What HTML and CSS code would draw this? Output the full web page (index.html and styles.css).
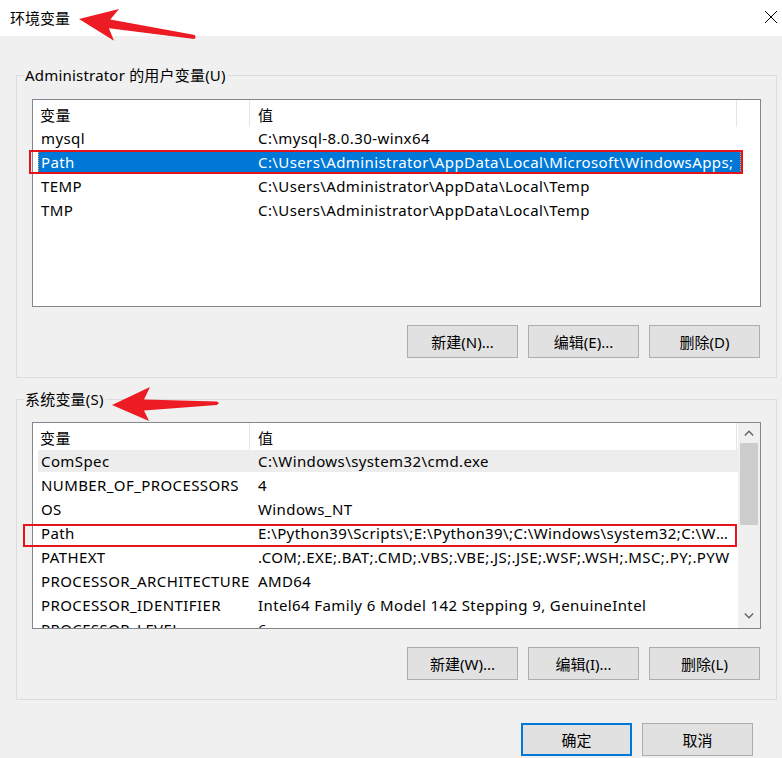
FILE: index.html
```html
<!DOCTYPE html>
<html lang="zh-CN">
<head>
<meta charset="utf-8">
<title>环境变量</title>
<link rel="stylesheet" href="styles.css">
</head>
<body>
<div class="window">
  <div class="titlebar">
    <span class="title">环境变量</span>
    <svg class="close" width="14" height="14" viewBox="0 0 14 14"><path d="M1 1L13 13M13 1L1 13" stroke="#000" stroke-width="1" fill="none"/></svg>
  </div>
  <div class="dialog">
    <fieldset class="group">
      <legend>Administrator 的用户变量(U)</legend>
      <div class="list">
        <div class="list-main">
          <div class="list-head"><div class="c1">变量</div><div class="c2">值</div></div>
          <div class="row"><div class="c1">mysql</div><div class="c2">C:\mysql-8.0.30-winx64</div></div>
          <div class="row selected"><div class="c1">Path</div><div class="c2">C:\Users\Administrator\AppData\Local\Microsoft\WindowsApps;</div></div>
          <div class="row"><div class="c1">TEMP</div><div class="c2">C:\Users\Administrator\AppData\Local\Temp</div></div>
          <div class="row"><div class="c1">TMP</div><div class="c2">C:\Users\Administrator\AppData\Local\Temp</div></div>
        </div>
      </div>
      <div class="btns">
        <button class="btn">新建(N)...</button>
        <button class="btn">编辑(E)...</button>
        <button class="btn">删除(D)</button>
      </div>
    </fieldset>
    <fieldset class="group group-sys">
      <legend>系统变量(S)</legend>
      <div class="list list-sys">
        <div class="list-main">
          <div class="list-head"><div class="c1">变量</div><div class="c2">值</div></div>
          <div class="row hot"><div class="c1">ComSpec</div><div class="c2">C:\Windows\system32\cmd.exe</div></div>
          <div class="row"><div class="c1">NUMBER_OF_PROCESSORS</div><div class="c2">4</div></div>
          <div class="row"><div class="c1">OS</div><div class="c2">Windows_NT</div></div>
          <div class="row"><div class="c1">Path</div><div class="c2">E:\Python39\Scripts\;E:\Python39\;C:\Windows\system32;C:\Windows;C:\Windows\System32\Wbem</div></div>
          <div class="row"><div class="c1">PATHEXT</div><div class="c2">.COM;.EXE;.BAT;.CMD;.VBS;.VBE;.JS;.JSE;.WSF;.WSH;.MSC;.PY;.PYW</div></div>
          <div class="row"><div class="c1">PROCESSOR_ARCHITECTURE</div><div class="c2">AMD64</div></div>
          <div class="row"><div class="c1">PROCESSOR_IDENTIFIER</div><div class="c2">Intel64 Family 6 Model 142 Stepping 9, GenuineIntel</div></div>
          <div class="row"><div class="c1">PROCESSOR_LEVEL</div><div class="c2">6</div></div>
        </div>
        <div class="scrollbar">
          <div class="sb-btn"><svg width="10" height="6" viewBox="0 0 10 6"><polyline points="0.8,5.5 5,1.2 9.2,5.5" fill="none" stroke="#606060" stroke-width="1.3"/></svg></div>
          <div class="sb-thumb"></div>
          <div class="sb-track"></div>
          <div class="sb-btn sb-down"><svg width="10" height="6" viewBox="0 0 10 6"><polyline points="0.8,0.5 5,4.8 9.2,0.5" fill="none" stroke="#606060" stroke-width="1.3"/></svg></div>
        </div>
      </div>
      <div class="btns">
        <button class="btn">新建(W)...</button>
        <button class="btn">编辑(I)...</button>
        <button class="btn">删除(L)</button>
      </div>
    </fieldset>
    <div class="footer">
      <button class="btn btn-default">确定</button>
      <button class="btn">取消</button>
    </div>
  </div>

  <div class="mark mark-user"></div>
  <div class="mark mark-sys"></div>
  <svg class="arrows" width="782" height="758" viewBox="0 0 782 758">
    <polygon points="79,19 119,9 110.3,19.4 194.9,35 195.6,37.2 194.3,39 108.9,28.3 114,40.7" fill="#ed1c24"/>
    <polygon points="112,405 150,387 144,399.5 217,401.5 219,403 217,405 144,410.5 149,421" fill="#ed1c24"/>
  </svg>
</div>
</body>
</html>
```

FILE: styles.css
```css
* { box-sizing: border-box; }
html, body { margin: 0; padding: 0; }
body {
  width: 782px;
  height: 758px;
  overflow: hidden;
  background: #f0f0f0;
  font-family: "Noto Sans", "Noto Sans CJK SC", sans-serif;
  font-size: 15px;
  color: #000;
}
.window { position: relative; width: 782px; height: 758px; }

.titlebar {
  height: 36px;
  background: #fff;
  display: flex;
  align-items: flex-start;
  justify-content: space-between;
  padding: 0 4px 0 10px;
}
.title { line-height: 20px; margin-top: 8px; }
.close { margin-top: 10px; }

.dialog { padding: 29px 5px 0 16px; }

.group {
  margin: 0;
  padding: 14px 15px 19px;
  border: 1px solid #dcdcdc;
  min-width: 0;
}
.group legend {
  padding: 0 1px;
  margin-left: -8px;
  line-height: 20px;
  letter-spacing: 0.2px;
}
.group-sys { margin-top: 11px; padding-top: 13px; }

.list {
  display: flex;
  height: 208px;
  background: #fff;
  border: 1px solid #828790;
  overflow: hidden;
}
.list-sys { height: 207px; }
.list-main { flex: 1; min-width: 0; overflow: hidden; letter-spacing: 0.4px; }

.list-head { display: flex; height: 27px; margin-left: 5px; white-space: nowrap; }
.list-head .c1 { width: 212px; flex: none; border-right: 1px solid #e5e5e5; padding: 3px 0 0 2px; line-height: 24px; }
.list-head .c2 { width: 487px; flex: none; border-right: 1px solid #e5e5e5; padding: 3px 0 0 8px; line-height: 24px; }

.row {
  display: flex;
  height: 22px;
  line-height: 22px;
  margin: 0 19px 2px 5px;
  white-space: nowrap;
}
.list-sys .row { margin-right: 0; }
.row .c1 { width: 212px; flex: none; padding-left: 3px; overflow: hidden; }
.row .c2 { flex: 1; min-width: 0; padding: 0 6px 0 8px; overflow: hidden; text-overflow: ellipsis; }
.row.selected {
  background: #0078d7;
  color: #fff;
  outline: 1px dotted #f0a050;
  outline-offset: -1px;
}
.row.hot { background: #ededed; }

.scrollbar {
  width: 22px;
  flex: none;
  background: #f0f0f0;
  display: flex;
  flex-direction: column;
}
.sb-btn { height: 20px; display: flex; align-items: center; justify-content: center; }
.sb-down { height: 24px; }
.sb-thumb { height: 82px; width: 18px; margin: 0 auto; background: #cdcdcd; }
.sb-track { flex: 1; }

.btns {
  display: flex;
  justify-content: flex-end;
  gap: 10px;
  margin-top: 18px;
  padding-right: 1px;
}
.btn {
  width: 111px;
  height: 33px;
  padding: 0;
  background: #e1e1e1;
  border: 1px solid #adadad;
  border-radius: 0;
  font: inherit;
  color: #000;
}
.btn-default { border: 2px solid #0078d7; }

.footer {
  display: flex;
  justify-content: flex-end;
  gap: 10px;
  margin-top: 23px;
  padding-right: 24px;
}

.mark { position: absolute; border: 2px solid #e8141c; pointer-events: none; }
.mark-user { left: 29px; top: 150px; width: 714px; height: 24px; }
.mark-sys { left: 23px; top: 524px; width: 714px; height: 23px; }

.arrows { position: absolute; left: 0; top: 0; pointer-events: none; }
```
